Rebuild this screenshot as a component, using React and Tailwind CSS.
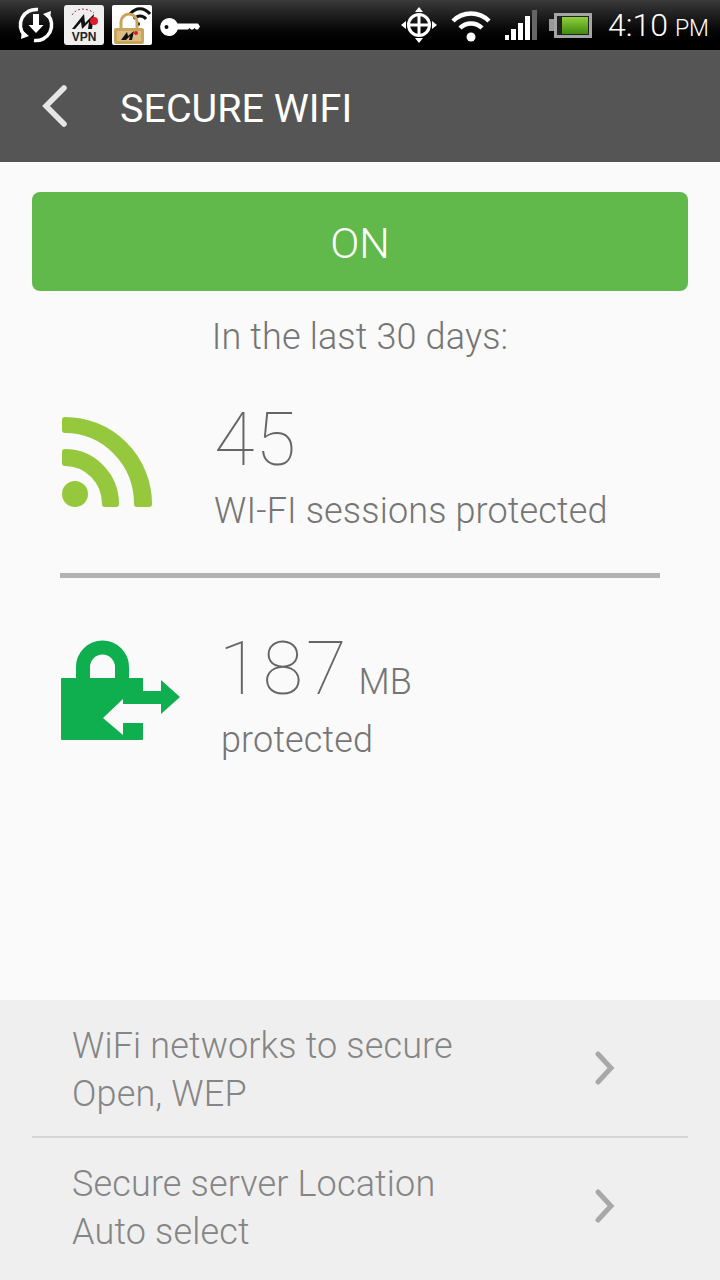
function DownloadSync() {
  return (
    <svg width="36" height="36" viewBox="0 0 36 36" fill="none">
      <path d="M6.500 28.500A15.500 15.500 0 0 1 20 2.600" stroke="#fff" strokeWidth="3.500" />
      <path d="M29.500 7.500A15.500 15.500 0 0 1 16 33.400" stroke="#fff" strokeWidth="3.500" />
      <path d="M4 23l7 6-8 3zM32 13l-7-6 8-3z" fill="#fff" />
      <path d="M15 7h6v11h4.500L18 26l-7.500-8H15z" fill="#fff" />
    </svg>
  );
}

function VpnBadge() {
  return (
    <div className="w-10 h-10 rounded-[3px] bg-[#efefef] flex flex-col items-center overflow-hidden">
      <svg width="40" height="27" viewBox="0 0 40 27" fill="none" className="shrink-0">
        <path d="M8 10C12 3 22 2 30 8" stroke="#b33" strokeWidth="1" strokeDasharray="2 2" />
        <path d="M8 24L20 9l1 9 9-9-2 15h-4l1-7-7 7-1-7-6 7z" fill="#111" />
        <circle cx="30" cy="16" r="4" fill="#e0192c" />
      </svg>
      <span className="text-[12px] leading-[10px] font-bold text-[#222] font-['Liberation_Sans',sans-serif]">VPN</span>
    </div>
  );
}

function LockWifiBadge() {
  return (
    <svg width="40" height="40" viewBox="0 0 40 40" className="rounded-[2px] bg-white">
      <path d="M18 9C24 2 32 2 38 9M22 14c3-4 9-4 12 0" fill="none" stroke="#111" strokeWidth="3" />
      <circle cx="26" cy="19" r="2" fill="#111" />
      <path d="M9 23v-6a8 8 0 0 1 16 0v6" fill="none" stroke="#c9a45c" strokeWidth="3" />
      <rect x="2" y="23" width="30" height="16" rx="2" fill="#c9a45c" />
      <rect x="5" y="26" width="24" height="10" fill="#d9bd83" />
      <path d="M9 35l6-8 1 4 6-5-2 9h-3l1-4-4 4z" fill="#111" />
      <circle cx="24" cy="28" r="2" fill="#e0192c" />
    </svg>
  );
}

function KeyIcon() {
  return (
    <svg width="40" height="18" viewBox="0 0 40 18">
      <path fillRule="evenodd" d="M9 0a9 9 0 0 1 8.500 5.500H38l2 3-2 3h-2l-1.500-1.500L33 11.500h-2l-1.500-1.500L28 11.500H17.800A9 9 0 1 1 9 0zM6.500 7a2 2 0 1 0 0 4 2 2 0 0 0 0-4z" fill="#fff" />
    </svg>
  );
}

function GpsIcon() {
  return (
    <svg width="36" height="36" viewBox="0 0 36 36" fill="none">
      <circle cx="18" cy="18" r="10.500" stroke="#fff" strokeWidth="3" />
      <path d="M18 8v20M8 18h20" stroke="#fff" strokeWidth="3" />
      <path d="M18 0l4 5h-8zM18 36l4-5h-8zM0 18l5-4v8zM36 18l-5-4v8z" fill="#fff" />
    </svg>
  );
}

function WifiIcon() {
  return (
    <svg width="40" height="33" viewBox="0 0 40 33" fill="none">
      <path d="M2 12C12 2 28 2 38 12" stroke="#fff" strokeWidth="4.500" />
      <path d="M9 19c6-6 16-6 22 0" stroke="#fff" strokeWidth="4.500" />
      <circle cx="20" cy="28" r="4.500" fill="#fff" />
    </svg>
  );
}

function SignalIcon() {
  return (
    <div className="flex items-end gap-[2px] h-[30px]">
      <div className="w-[4px] h-[5px] bg-white" />
      <div className="w-[5px] h-[11px] bg-white" />
      <div className="w-[5px] h-[17px] bg-white" />
      <div className="w-[5px] h-[24px] bg-white" />
      <div className="w-[5px] h-[30px] bg-[#666]" />
    </div>
  );
}

function BatteryIcon() {
  return (
    <div className="flex items-center">
      <div className="w-[5px] h-[12px] bg-[#999]" />
      <div className="w-[38px] h-[25px] border-[3px] border-[#a5a5a5] p-[1px] bg-[#222]">
        <div className="ml-[4px] h-full bg-gradient-to-b from-[#8fd13a] to-[#3f8a10]" />
      </div>
    </div>
  );
}

function StatusBar() {
  return (
    <div className="h-[50px] flex items-center justify-between pl-[18px] pr-[11px] bg-gradient-to-b from-[#3a3a3a] via-[#0f0f0f] to-[#000]">
      <div className="flex items-center">
        <DownloadSync />
        <div className="ml-[10px]"><VpnBadge /></div>
        <div className="ml-[8px]"><LockWifiBadge /></div>
        <div className="ml-[8px] mt-[3px]"><KeyIcon /></div>
      </div>
      <div className="flex items-center">
        <GpsIcon />
        <div className="ml-[14px]"><WifiIcon /></div>
        <div className="ml-[14px]"><SignalIcon /></div>
        <div className="ml-[12px]"><BatteryIcon /></div>
        <div className="ml-[16px] flex items-baseline gap-[7px] text-white font-light leading-none whitespace-nowrap">
          <span className="text-[32px]">4:10</span>
          <span className="text-[23px]">PM</span>
        </div>
      </div>
    </div>
  );
}

function RssIcon() {
  return (
    <svg width="92" height="92" viewBox="0 0 92 92" fill="#95c83d" stroke="#95c83d" strokeWidth="6" strokeLinejoin="round">
      <path d="M3 3A84 84 0 0 1 87 87H75A72 74 0 0 0 3 13Z" />
      <path d="M3 35A51 52 0 0 1 54 87H43A40 41 0 0 0 3 46Z" />
      <circle cx="13" cy="77" r="10" />
    </svg>
  );
}

function LockArrowsIcon() {
  return (
    <svg width="120" height="102" viewBox="0 0 120 102" fill="none">
      <path d="M22 40V27a19.500 19.500 0 0 1 39 0v13" stroke="#0fae4f" strokeWidth="14" />
      <path d="M1 38H82V64H62V59L42 78L62 95V83H82V99q0 1-1 1H1q-1 0-1-1V39q0-1 1-1z" fill="#0fae4f" />
      <path d="M82 51H100V40L119 57L100 74V64H82z" fill="#0fae4f" />
    </svg>
  );
}

function Chevron({ dir, color, w = 24, h = 36, sw = 5 }) {
  const d = dir === 'left' ? `M${w - 3} 3L4 ${h / 2}L${w - 3} ${h - 3}` : `M3 3L${w - 4} ${h / 2}L3 ${h - 3}`;
  return (
    <svg width={w} height={h} viewBox={`0 0 ${w} ${h}`} fill="none">
      <path d={d} stroke={color} strokeWidth={sw} strokeLinecap="round" />
    </svg>
  );
}

function SettingRow({ title, value }) {
  return (
    <div className="flex items-center justify-between pl-[72px] pr-[105px] pt-[22px] text-[36px] leading-[48px] text-[#858585] font-light tracking-[0.15px]">
      <div>
        <div>{title}</div>
        <div>{value}</div>
      </div>
      <div className="mb-[4px]">
        <Chevron dir="right" color="#a8a8a8" w={20} h={34} sw={5} />
      </div>
    </div>
  );
}

export default function App() {
  return (
    <div className="w-[720px] h-[1280px] flex flex-col bg-[#fafafa] overflow-hidden font-['Roboto',sans-serif]">
      <StatusBar />

      {/* Title bar */}
      <div className="h-[112px] flex items-center pl-[42px] bg-[#555555]">
        <Chevron dir="left" color="#e6e6e6" w={25} h={42} sw={5.5} />
        <h1 className="ml-[53px] pt-[5px] text-[39.500px] leading-[60px] text-white">SECURE WIFI</h1>
      </div>

      {/* Main */}
      <div className="flex-1 px-[32px] pt-[30px]">
        <div className="h-[99px] pt-[3px] flex items-center justify-center rounded-[8px] bg-[#62b94b] text-[43px] font-light text-white">
          ON
        </div>
        <p className="mt-[24px] text-center text-[36px] leading-[44px] tracking-[0.15px] font-light text-[#757575]">In the last 30 days:</p>

        <div className="mt-[39px] ml-[30px] flex items-start">
          <div className="mt-[19px]"><RssIcon /></div>
          <div className="ml-[60px] font-light tracking-[0.15px] text-[#757575]">
            <div className="text-[74px] leading-[84px] font-thin tracking-[1px] text-[#666]">45</div>
            <div className="text-[36px] leading-[48px] mt-[5px]">WI-FI sessions protected</div>
          </div>
        </div>

        <div className="mt-[38px] mx-[28px] h-[5px] bg-[#b3b3b3]" />

        <div className="mt-[49px] ml-[29px] flex items-start">
          <div className="mt-[13px]"><LockArrowsIcon /></div>
          <div className="ml-[38px] font-light tracking-[0.15px] text-[#757575]">
            <div className="text-[74px] leading-[83px]">
              <span className="font-thin tracking-[3px] text-[#666]">187</span>
              <span className="ml-[9px] text-[36px] leading-none">MB</span>
            </div>
            <div className="text-[36px] leading-[48px] mt-[6px] ml-[2px]">protected</div>
          </div>
        </div>
      </div>

      {/* Settings */}
      <div className="h-[280px] bg-[#efefef]">
        <div className="h-[136px]">
          <SettingRow title="WiFi networks to secure" value="Open, WEP" />
        </div>
        <div className="mx-[32px] h-[2px] bg-[#d6d6d6]" />
        <SettingRow title="Secure server Location" value="Auto select" />
      </div>
    </div>
  );
}
